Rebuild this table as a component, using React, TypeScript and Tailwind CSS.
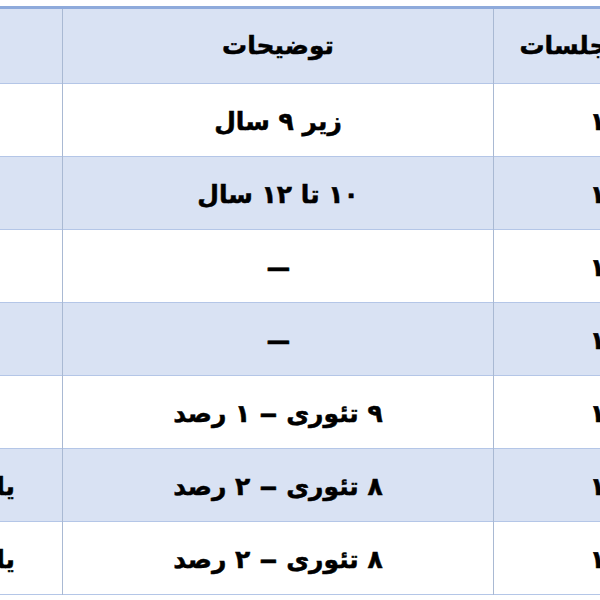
const rows = [
  { sessions: '۱', desc: ['زیر ۹ سال'], note: '' },
  { sessions: '۱', desc: ['۱۰ تا ۱۲ سال'], note: '' },
  { sessions: '۱', desc: ['', ''], note: '' },
  { sessions: '۱', desc: ['', ''], note: '' },
  { sessions: '۱', desc: ['۹ تئوری ', ' ۱ رصد'], note: '' },
  { sessions: '۱', desc: ['۸ تئوری ', ' ۲ رصد'], note: 'یا ۱۰ جلسه' },
  { sessions: '۱', desc: ['۸ تئوری ', ' ۲ رصد'], note: 'یا ۱۰ جلسه' },
];

const cell = 'border-x border-[#a9b9d3] align-middle text-[25px]';

function Desc({ parts }: { parts: string[] }) {
  if (parts.length === 1) return <>{parts[0]}</>;
  return (
    <>
      {parts[0]}
      <span className={`inline-block ${parts[0] ? 'scale-x-150 px-[3px]' : 'scale-x-[2.1]'}`}>–</span>
      {parts[1]}
    </>
  );
}

export default function App() {
  return (
    <div className="h-[600px] w-[600px] overflow-hidden bg-white pt-[6px] font-['DejaVu_Sans',sans-serif] font-bold text-black [-webkit-text-stroke:0.5px_black]">
      <div className="ml-[-150px] w-[851px]">
        <table dir="rtl" className="w-[851px] table-fixed border-collapse">
          <colgroup>
            <col className="w-[208px]" />
            <col className="w-[431px]" />
            <col className="w-[212px]" />
          </colgroup>
          <thead>
            <tr className="h-[76px] border-t-[3px] border-b border-t-[#8eaadb] border-b-[#b4c6e7] bg-[#d9e2f3]">
              <th className={`${cell} text-center`}>تعداد جلسات</th>
              <th className={`${cell} text-center`}>توضیحات</th>
              <th className={`${cell} pr-[47px] text-right`}></th>
            </tr>
          </thead>
          <tbody>
            {rows.map((r, i) => (
              <tr
                key={i}
                className={`h-[73px] border-b border-[#b4c6e7] ${i % 2 === 1 ? 'bg-[#d9e2f3]' : 'bg-white'}`}
              >
                <td className={`${cell} pt-[3px] text-center`}>{r.sessions}</td>
                <td className={`${cell} pt-[3px] text-center`}>
                  <Desc parts={r.desc} />
                </td>
                <td className={`${cell} pt-[3px] pr-[47px] text-right`}>{r.note}</td>
              </tr>
            ))}
          </tbody>
        </table>
      </div>
    </div>
  );
}
